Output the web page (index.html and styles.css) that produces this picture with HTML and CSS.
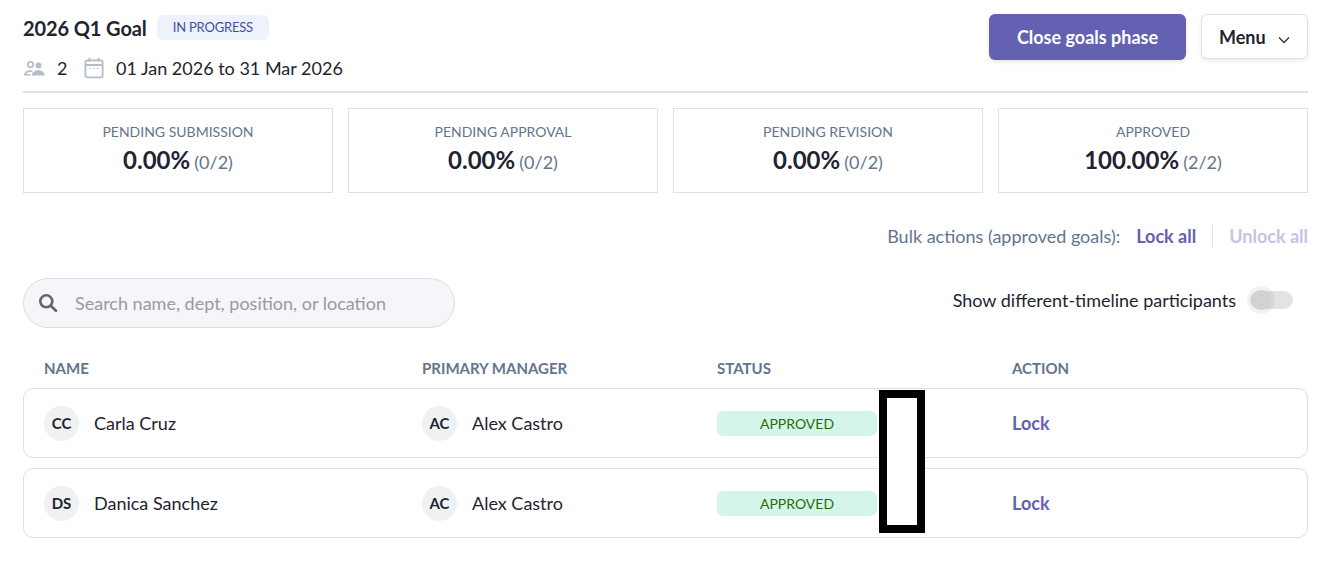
FILE: index.html
```html
<!DOCTYPE html>
<html lang="en">
<head>
    <meta charset="UTF-8">
    <meta name="viewport" content="width=device-width, initial-scale=1.0">
    <title>2026 Q1 Goal</title>
    <link rel="stylesheet" href="styles.css">
</head>
<body>
    <div class="header">
        <div>
            <div class="title-row">
                <h1>2026 Q1 Goal</h1>
                <span class="phase-tag">IN PROGRESS</span>
            </div>
            <div class="meta-row">
                <svg class="icon-people" width="22" height="18" viewBox="0 0 22 18" fill="#b4bdcb">
                    <path fill-rule="evenodd" d="M7.5 2a3.6 3.6 0 1 1 0 7.2a3.6 3.6 0 0 1 0-7.2zm0 1.7a1.9 1.9 0 1 0 0 3.8a1.9 1.9 0 0 0 0-3.8z"/>
                    <path d="M15.5 3.6a3 3 0 1 1 0 6a3 3 0 0 1 0-6z"/>
                    <path fill-rule="evenodd" d="M1 16.5c0-3.4 3-5.3 6.5-5.3c1 0 2 .2 2.800 .5c-.8 .3-1.500 .8-2 1.300c-2.600-.3-4.800 .6-5.300 2h4.500l-.5 1.500z"/>
                    <path d="M8.600 16.500c0-3 3-5.300 6.900-5.300s6 2.300 6 5.300z"/>
                </svg>
                <span class="count">2</span>
                <svg class="icon-cal" width="20" height="22" viewBox="0 0 20 22" fill="none" stroke="#b4bdcb" stroke-width="1.800">
                    <rect x="1.400" y="3.400" width="17.200" height="17" rx="2"/>
                    <path d="M1.400 8h17.200M5.500 .8v4M14.500 .8v4"/>
                    <path d="M5.500 11.500h1.600M9.200 11.500h1.600M12.900 11.500h1.600" stroke-width="1.200"/>
                </svg>
                <span>01 Jan 2026 to 31 Mar 2026</span>
            </div>
        </div>
        <div class="header-btns">
            <button class="btn btn-primary">Close goals phase</button>
            <button class="btn btn-menu">Menu
                <svg width="12" height="8" viewBox="0 0 12 8" fill="none" stroke="#333" stroke-width="1.300"><path d="M1 1.500l5 5l5-5"/></svg>
            </button>
        </div>
    </div>

    <div class="stats">
        <div class="stat-card">
            <div class="stat-label">PENDING SUBMISSION</div>
            <div class="stat-value"><strong>0.00%</strong> <span>(0/2)</span></div>
        </div>
        <div class="stat-card">
            <div class="stat-label">PENDING APPROVAL</div>
            <div class="stat-value"><strong>0.00%</strong> <span>(0/2)</span></div>
        </div>
        <div class="stat-card">
            <div class="stat-label">PENDING REVISION</div>
            <div class="stat-value"><strong>0.00%</strong> <span>(0/2)</span></div>
        </div>
        <div class="stat-card">
            <div class="stat-label">APPROVED</div>
            <div class="stat-value"><strong>100.00%</strong> <span>(2/2)</span></div>
        </div>
    </div>

    <div class="bulk-row">
        <span class="bulk-label">Bulk actions (approved goals):</span>
        <a class="bulk-link">Lock all</a>
        <a class="bulk-link bulk-disabled">Unlock all</a>
    </div>

    <div class="filter-row">
        <div class="search">
            <svg width="20" height="20" viewBox="0 0 20 20" fill="none" stroke="#666" stroke-width="2.600">
                <circle cx="8.300" cy="8.300" r="6"/>
                <path d="M12.800 12.800l5.200 5" stroke-linecap="round"/>
            </svg>
            <span>Search name, dept, position, or location</span>
        </div>
        <div class="toggle-wrap">
            <span>Show different-timeline participants</span>
            <div class="toggle"><div class="toggle-thumb"></div></div>
        </div>
    </div>

    <div class="table-head grid-cols">
        <div>NAME</div>
        <div>PRIMARY MANAGER</div>
        <div>STATUS</div>
        <div>ACTION</div>
    </div>

    <div class="row grid-cols">
        <div class="person"><span class="avatar">CC</span>Carla Cruz</div>
        <div class="person"><span class="avatar">AC</span>Alex Castro</div>
        <div><span class="status-pill">APPROVED</span></div>
        <div><a class="row-action">Lock</a></div>
    </div>
    <div class="row grid-cols">
        <div class="person"><span class="avatar">DS</span>Danica Sanchez</div>
        <div class="person"><span class="avatar">AC</span>Alex Castro</div>
        <div><span class="status-pill">APPROVED</span></div>
        <div><a class="row-action">Lock</a></div>
    </div>

    <div class="redaction"></div>
</body>
</html>
```

FILE: styles.css
```css
* {
    box-sizing: border-box;
}
body {
    margin: 0;
    padding: 14px 18px 0 23px;
    font-family: Lato, "Open Sans", sans-serif;
    color: #1f2430;
    background: #fff;
    height: 562px;
    overflow: hidden;
}
.header {
    display: flex;
    justify-content: space-between;
    align-items: flex-start;
    height: 79px;
    border-bottom: 2px solid #e0e0e2;
}
.title-row {
    display: flex;
    align-items: center;
    height: 27px;
    margin-top: 0;
}
h1 {
    margin: 0;
    font-size: 20px;
    font-weight: 700;
    letter-spacing: -0.1px;
}
.phase-tag {
    margin-left: 10px;
    padding: 0 16px;
    height: 25px;
    line-height: 25px;
    border-radius: 6px;
    background: #eef2fd;
    color: #3f51a3;
    font-size: 13px;
    letter-spacing: -0.2px;
}
.meta-row {
    display: flex;
    align-items: center;
    margin-top: 14px;
    font-size: 18px;
    height: 26px;
}
.count {
    margin-left: 12px;
    width: 27px;
    margin-right: 0;
}
.icon-cal {
    margin-right: 12px;
}
.header-btns {
    display: flex;
    gap: 15px;
}
.btn {
    font-family: inherit;
    font-size: 18px;
    font-weight: 700;
    border-radius: 6px;
    cursor: pointer;
}
.btn-primary {
    width: 197px;
    height: 46px;
    border: none;
    background: #6461b3;
    color: #fff;
    box-shadow: 0 2px 4px rgba(0,0,0,0.1);
}
.btn-menu {
    width: 107px;
    height: 45px;
    border: 1px solid #dfe2ea;
    background: #fff;
    color: #1f2430;
    box-shadow: 0 2px 4px rgba(0,0,0,0.08);
}
.btn-menu svg {
    margin-left: 8px;
}
.stats {
    display: grid;
    grid-template-columns: repeat(4, 310px);
    gap: 15px;
    margin-top: 15px;
}
.stat-card {
    height: 85px;
    border: 1px solid #dcdfe6;
    text-align: center;
    padding-top: 14px;
}
.stat-label {
    font-size: 14px;
    color: #64748b;
    line-height: 17px;
}
.stat-value {
    margin-top: 5px;
    line-height: 30px;
}
.stat-value strong {
    font-size: 24px;
    font-weight: 700;
}
.stat-value span {
    font-size: 18px;
    color: #64748b;
}
.bulk-row {
    display: flex;
    justify-content: flex-end;
    align-items: center;
    margin-top: 30px;
    height: 26px;
    font-size: 18px;
}
.bulk-label {
    color: #64748b;
}
.bulk-link {
    color: #6461b3;
    font-weight: 700;
    margin-left: 16px;
}
.bulk-disabled {
    color: #c5c4e4;
    border-left: 1px solid #dfe2ea;
    padding-left: 16px;
}
.filter-row {
    display: flex;
    justify-content: space-between;
    align-items: flex-start;
    margin-top: 29px;
}
.search {
    display: flex;
    align-items: center;
    width: 432px;
    height: 50px;
    border: 1px solid #dcdce2;
    border-radius: 25px;
    background: #f5f5fa;
    padding-left: 14px;
    color: #9a9a9e;
    font-size: 18px;
}
.search span {
    margin-left: 17px;
}
.toggle-wrap {
    display: flex;
    align-items: center;
    margin-top: 9px;
    margin-right: 15px;
    font-size: 18px;
    height: 26px;
}
.toggle {
    position: relative;
    margin-left: 14px;
    width: 43px;
    height: 18px;
    border-radius: 9px;
    background: #e3e3e3;
}
.toggle-thumb {
    position: absolute;
    left: 1px;
    top: -1px;
    width: 20px;
    height: 20px;
    border-radius: 50%;
    background: #d2d2d2;
    box-shadow: 0 0 0 4px rgba(0,0,0,0.05);
}
.grid-cols {
    display: grid;
    grid-template-columns: 378px 295px 295px 1fr;
    align-items: center;
    padding-left: 20px;
}
.table-head {
    margin-top: 27px;
    height: 25px;
    padding-left: 21px;
    font-size: 15px;
    font-weight: 700;
    color: #64748b;
}
.row {
    height: 70px;
    margin-top: 8px;
    border: 1px solid #dcdfe6;
    border-radius: 10px;
    font-size: 18px;
}
.row + .row {
    margin-top: 10px;
}
.person {
    display: flex;
    align-items: center;
}
.avatar {
    display: flex;
    align-items: center;
    justify-content: center;
    width: 35px;
    height: 35px;
    margin-right: 15px;
    border-radius: 50%;
    background: #f0f1f3;
    font-size: 15px;
    font-weight: 700;
}
.status-pill {
    display: block;
    width: 160px;
    height: 25px;
    line-height: 25px;
    border-radius: 6px;
    background: #d3f6e8;
    color: #2a6a0a;
    font-size: 14px;
    text-align: center;
}
.row-action {
    color: #6461b3;
    font-weight: 700;
}
.redaction {
    position: absolute;
    left: 879px;
    top: 390px;
    width: 46px;
    height: 143px;
    border: 8px solid #000;
    background: #fff;
}
```
